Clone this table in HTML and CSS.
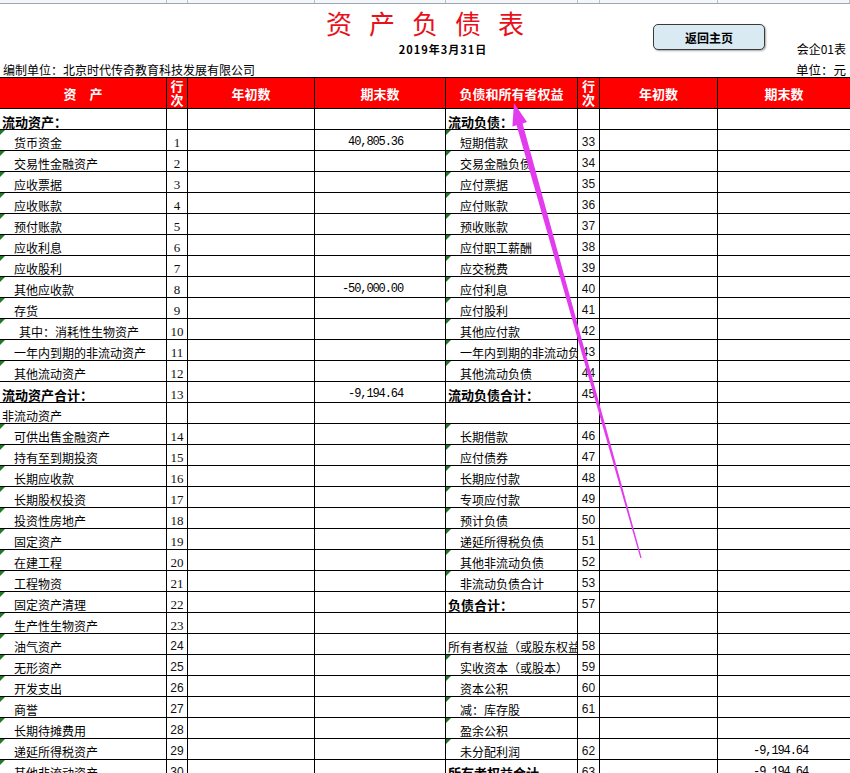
FILE: index.html
```html
<!DOCTYPE html>
<html lang="zh-CN">
<head>
<meta charset="utf-8">
<title>资产负债表</title>
<link rel="stylesheet" href="styles.css">
</head>
<body>
<div class="colhdr">
  <span class="c1"></span><span class="c2"></span><span class="c3"></span><span class="c4"></span><span class="c5"></span><span class="c6"></span><span class="c7"></span><span class="c8"></span>
</div>
<header class="sheet-head">
  <h1 class="title">资产负债表</h1>
  <button class="home-btn" type="button">返回主页</button>
  <div class="date">2019年3月31日</div>
  <div class="form-no">会企01表</div>
  <div class="company">编制单位：北京时代传奇教育科技发展有限公司</div>
  <div class="unit">单位：元</div>
</header>
<table class="bs">
  <colgroup>
    <col class="w-name"><col class="w-no"><col class="w-begin"><col class="w-end">
    <col class="w-name2"><col class="w-no2"><col class="w-begin2"><col class="w-end2">
  </colgroup>
  <thead>
    <tr class="hdr">
      <th>资　产</th><th class="stack"><span>行</span><span>次</span></th><th>年初数</th><th>期末数</th>
      <th>负债和所有者权益</th><th class="stack"><span>行</span><span>次</span></th><th>年初数</th><th>期末数</th>
    </tr>
  </thead>
  <tbody>
    <tr><td class="b">流动资产：</td><td></td><td></td><td></td><td class="b">流动负债：</td><td></td><td></td><td></td></tr>
    <tr><td class="i">货币资金</td><td class="n s">1</td><td></td><td class="v">40,805.36</td><td class="i">短期借款</td><td class="n">33</td><td></td><td></td></tr>
    <tr><td class="i">交易性金融资产</td><td class="n s">2</td><td></td><td></td><td class="i">交易金融负债</td><td class="n">34</td><td></td><td></td></tr>
    <tr><td class="i">应收票据</td><td class="n s">3</td><td></td><td></td><td class="i">应付票据</td><td class="n">35</td><td></td><td></td></tr>
    <tr><td class="i">应收账款</td><td class="n s">4</td><td></td><td></td><td class="i">应付账款</td><td class="n">36</td><td></td><td></td></tr>
    <tr><td class="i">预付账款</td><td class="n s">5</td><td></td><td></td><td class="i">预收账款</td><td class="n">37</td><td></td><td></td></tr>
    <tr><td class="i">应收利息</td><td class="n s">6</td><td></td><td></td><td class="i">应付职工薪酬</td><td class="n">38</td><td></td><td></td></tr>
    <tr><td class="i">应收股利</td><td class="n s">7</td><td></td><td></td><td class="i">应交税费</td><td class="n">39</td><td></td><td></td></tr>
    <tr><td class="i">其他应收款</td><td class="n s">8</td><td></td><td class="v">-50,000.00</td><td class="i">应付利息</td><td class="n">40</td><td></td><td></td></tr>
    <tr><td class="i">存货</td><td class="n s">9</td><td></td><td></td><td class="i">应付股利</td><td class="n">41</td><td></td><td></td></tr>
    <tr><td class="i i2">其中：消耗性生物资产</td><td class="n s">10</td><td></td><td></td><td class="i">其他应付款</td><td class="n">42</td><td></td><td></td></tr>
    <tr><td class="i">一年内到期的非流动资产</td><td class="n s">11</td><td></td><td></td><td class="i"><span class="clip">一年内到期的非流动负债</span></td><td class="n">43</td><td></td><td></td></tr>
    <tr><td class="i">其他流动资产</td><td class="n s">12</td><td></td><td></td><td class="i">其他流动负债</td><td class="n">44</td><td></td><td></td></tr>
    <tr><td class="b">流动资产合计：</td><td class="n s">13</td><td></td><td class="v">-9,194.64</td><td class="b">流动负债合计：</td><td class="n">45</td><td></td><td></td></tr>
    <tr><td class="p">非流动资产</td><td></td><td></td><td></td><td></td><td></td><td></td><td></td></tr>
    <tr><td class="i">可供出售金融资产</td><td class="n s">14</td><td></td><td></td><td class="i">长期借款</td><td class="n">46</td><td></td><td></td></tr>
    <tr><td class="i">持有至到期投资</td><td class="n s">15</td><td></td><td></td><td class="i">应付债券</td><td class="n">47</td><td></td><td></td></tr>
    <tr><td class="i">长期应收款</td><td class="n s">16</td><td></td><td></td><td class="i">长期应付款</td><td class="n">48</td><td></td><td></td></tr>
    <tr><td class="i">长期股权投资</td><td class="n s">17</td><td></td><td></td><td class="i">专项应付款</td><td class="n">49</td><td></td><td></td></tr>
    <tr><td class="i">投资性房地产</td><td class="n s">18</td><td></td><td></td><td class="i">预计负债</td><td class="n">50</td><td></td><td></td></tr>
    <tr><td class="i">固定资产</td><td class="n s">19</td><td></td><td></td><td class="i">递延所得税负债</td><td class="n">51</td><td></td><td></td></tr>
    <tr><td class="i">在建工程</td><td class="n s">20</td><td></td><td></td><td class="i">其他非流动负债</td><td class="n">52</td><td></td><td></td></tr>
    <tr><td class="i">工程物资</td><td class="n s">21</td><td></td><td></td><td class="i">非流动负债合计</td><td class="n">53</td><td></td><td></td></tr>
    <tr><td class="i">固定资产清理</td><td class="n s">22</td><td></td><td></td><td class="b">负债合计：</td><td class="n">57</td><td></td><td></td></tr>
    <tr><td class="i">生产性生物资产</td><td class="n s">23</td><td></td><td></td><td></td><td></td><td></td><td></td></tr>
    <tr><td class="i">油气资产</td><td class="n">24</td><td></td><td></td><td class="p"><span class="clip">所有者权益（或股东权益）</span></td><td class="n">58</td><td></td><td></td></tr>
    <tr><td class="i">无形资产</td><td class="n">25</td><td></td><td></td><td class="i">实收资本（或股本）</td><td class="n">59</td><td></td><td></td></tr>
    <tr><td class="i">开发支出</td><td class="n">26</td><td></td><td></td><td class="i">资本公积</td><td class="n">60</td><td></td><td></td></tr>
    <tr><td class="i">商誉</td><td class="n">27</td><td></td><td></td><td class="i">减：库存股</td><td class="n">61</td><td></td><td></td></tr>
    <tr><td class="i">长期待摊费用</td><td class="n">28</td><td></td><td></td><td class="i">盈余公积</td><td class="n"></td><td></td><td></td></tr>
    <tr><td class="i">递延所得税资产</td><td class="n">29</td><td></td><td></td><td class="i">未分配利润</td><td class="n">62</td><td></td><td class="v">-9,194.64</td></tr>
    <tr><td class="i">其他非流动资产</td><td class="n">30</td><td></td><td></td><td class="b">所有者权益合计</td><td class="n">63</td><td></td><td class="v">-9,194.64</td></tr>
  </tbody>
</table>
<svg class="arrow" width="850" height="773" viewBox="0 0 850 773" aria-hidden="true">
  <polygon points="514,103 527,122 522.6,123.6 641.6,557.8 640.4,558.2 516.6,125.2 512.4,126.6" fill="#e23cee"/>
</svg>
</body>
</html>
```
FILE: styles.css
```css
html, body {
  margin: 0;
  padding: 0;
  overflow: hidden;
  background: #fff;
}
body {
  width: 850px;
  height: 773px;
  position: relative;
  font-family: "Noto Sans CJK SC", "Noto Sans", sans-serif;
  font-size: 12px;
  color: #000;
}

/* spreadsheet column letters strip (cut off) */
.colhdr {
  display: grid;
  grid-template-columns: 167px 21px 127px 131px 132px 22px 118px 132px;
  height: 3px;
  border-bottom: 1px solid #9aa7b5;
  background: #f4f6f8;
}
.colhdr span {
  border-right: 1px solid #b9c2cc;
}

.sheet-head {
  display: grid;
  grid-template-columns: 300px 250px 103px 112px 85px;
  grid-template-rows: 38px 14px 21px;
  height: 73px;
}
.title {
  grid-column: 2;
  grid-row: 1;
  margin: 0;
  align-self: center;
  text-align: center;
  padding-left: 17px;
  font-size: 26px;
  font-weight: normal;
  letter-spacing: 17px;
  color: #e8101a;
  line-height: 30px;
}
.home-btn {
  grid-column: 4;
  grid-row: 1 / 3;
  align-self: start;
  margin-top: 20px;
  height: 26px;
  width: 112px;
  padding: 0;
  border: 1px solid #3a3a3a;
  border-radius: 5px;
  background: #daeaf3;
  box-shadow: 1px 1px 2px rgba(0,0,0,0.35);
  font-family: "Noto Sans CJK SC", sans-serif;
  font-size: 12px;
  font-weight: bold;
  color: #000;
}
.date {
  grid-column: 2;
  grid-row: 2;
  text-align: center;
  padding-left: 36px;
  font-size: 11px;
  font-weight: bold;
  letter-spacing: 1px;
  line-height: 14px;
}
.form-no {
  grid-column: 5;
  grid-row: 2;
  text-align: right;
  padding-right: 4px;
  line-height: 14px;
}
.company {
  grid-column: 1 / 4;
  grid-row: 3;
  align-self: end;
  padding-left: 3px;
  line-height: 14px;
}
.unit {
  grid-column: 5;
  grid-row: 3;
  align-self: end;
  text-align: right;
  padding-right: 4px;
  line-height: 14px;
  font-size: 12.5px;
}

/* table */
.bs {
  border-collapse: collapse;
  table-layout: fixed;
  width: 851px;
  margin-left: -1px;
}
.w-name { width: 167px; }
.w-no { width: 21px; }
.w-begin { width: 127px; }
.w-end { width: 131px; }
.w-name2 { width: 132px; }
.w-no2 { width: 22px; }
.w-begin2 { width: 118px; }
.w-end2 { width: 133px; }

.bs th, .bs td {
  border: 1px solid #000;
  padding: 0;
  overflow: hidden;
  white-space: nowrap;
}
.hdr {
  height: 31px;
}
.hdr th {
  background: #ff0000;
  color: #fff;
  font-size: 13px;
  font-weight: bold;
  text-align: center;
  line-height: 15px;
}
.hdr th.stack span {
  display: block;
  line-height: 14px;
}
.bs tbody tr {
  height: 21px;
}
.bs td {
  vertical-align: bottom;
  line-height: 15px;
  position: relative;
}
.bs td .clip {
  display: block;
  overflow: hidden;
}
.bs td.b {
  font-weight: bold;
  font-size: 13px;
  padding-left: 2px;
}
.bs td.p {
  padding-left: 2px;
}
.bs td.i {
  padding-left: 14px;
}
.bs td.i2 {
  padding-left: 19px;
}
.bs td.i::before {
  content: "";
  position: absolute;
  left: 0;
  top: 0;
  width: 0;
  height: 0;
  border-top: 5px solid #1d7a23;
  border-right: 5px solid transparent;
}
.bs td.n {
  text-align: center;
  font-family: "Liberation Sans", "DejaVu Sans", sans-serif;
  font-size: 12px;
  color: #111;
}
.bs td.n.s {
  font-family: "Liberation Serif", serif;
  font-size: 13px;
}
.bs td.v {
  text-align: right;
  padding-right: 42px;
  font-family: "Liberation Mono", monospace;
  font-size: 12px;
  letter-spacing: -1.1px;
}

.arrow {
  position: absolute;
  left: 0;
  top: 0;
  pointer-events: none;
}
```
